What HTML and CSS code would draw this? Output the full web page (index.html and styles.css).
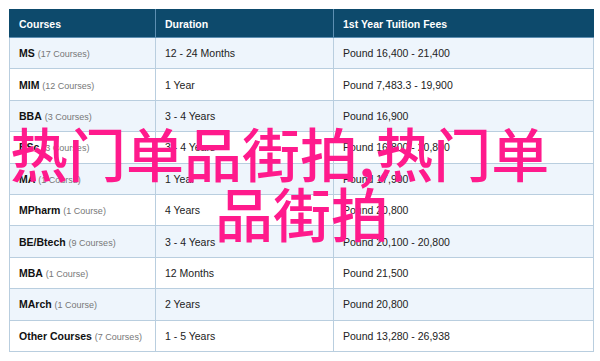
FILE: index.html
```html
<!DOCTYPE html>
<html lang="zh">
<head>
<meta charset="utf-8">
<title>Courses</title>
<link rel="stylesheet" href="styles.css">
</head>
<body>
<div class="page">
  <table class="courses">
    <colgroup>
      <col class="c1"><col class="c2"><col class="c3">
    </colgroup>
    <thead>
      <tr><th>Courses</th><th>Duration</th><th>1st Year Tuition Fees</th></tr>
    </thead>
    <tbody>
      <tr><td><b>MS</b> <span class="n">(17 Courses)</span></td><td>12 - 24 Months</td><td class="fee">Pound 16,400 - 21,400</td></tr>
      <tr><td><b>MIM</b> <span class="n">(12 Courses)</span></td><td>1 Year</td><td class="fee">Pound 7,483.3 - 19,900</td></tr>
      <tr><td><b>BBA</b> <span class="n">(3 Courses)</span></td><td>3 - 4 Years</td><td class="fee">Pound 16,900</td></tr>
      <tr><td><b>BSc</b> <span class="n">(3 Courses)</span></td><td>3 - 4 Years</td><td class="fee">Pound 16,800 - 20,800</td></tr>
      <tr><td><b>MA</b> <span class="n">(1 Course)</span></td><td>1 Year</td><td class="fee">Pound 17,900</td></tr>
      <tr><td><b>MPharm</b> <span class="n">(1 Course)</span></td><td>4 Years</td><td class="fee">Pound 20,800</td></tr>
      <tr><td><b>BE/Btech</b> <span class="n">(9 Courses)</span></td><td>3 - 4 Years</td><td class="fee">Pound 20,100 - 20,800</td></tr>
      <tr><td><b>MBA</b> <span class="n">(1 Course)</span></td><td>12 Months</td><td class="fee">Pound 21,500</td></tr>
      <tr><td><b>MArch</b> <span class="n">(1 Course)</span></td><td>2 Years</td><td class="fee">Pound 20,800</td></tr>
      <tr><td><b>Other Courses</b> <span class="n">(7 Courses)</span></td><td>1 - 5 Years</td><td class="fee">Pound 13,280 - 26,938</td></tr>
    </tbody>
  </table>
  <div class="overlay">
    <div class="line1">热门单品街拍,热门单</div>
    <div class="line2">品街拍</div>
  </div>
</div>
</body>
</html>
```

FILE: styles.css
```css
html, body {
  margin: 0;
  padding: 0;
  background: #ffffff;
}
.page {
  position: relative;
  width: 600px;
  height: 361px;
  padding: 9px 0 0 9px;
  box-sizing: border-box;
  font-family: "Liberation Sans", Arial, sans-serif;
}
.courses {
  border-collapse: collapse;
  table-layout: fixed;
  width: 584px;
  font-size: 10.5px;
  color: #222222;
}
.c1 { width: 146px; }
.c2 { width: 178px; }
.c3 { width: 260px; }
.courses th {
  background: #0d4a6c;
  color: #ffffff;
  font-weight: bold;
  text-align: left;
  height: 28px;
  padding: 0 0 0 9px;
  border: 1px solid #5d8fb2;
  border-top-color: #0d4a6c;
  box-sizing: border-box;
}
.courses th:first-child { border-left-color: #0d4a6c; }
.courses th:last-child { border-right-color: #0d4a6c; }
.courses td {
  height: 31.4px;
  padding: 0 0 0 9px;
  border: 1px solid #b9cedf;
  box-sizing: border-box;
  white-space: nowrap;
}
.courses td b { color: #111111; }
.courses tbody tr:nth-child(odd) td { background: #eef5fc; }
.courses .n {
  font-size: 9px;
  color: #777777;
}
.overlay {
  position: absolute;
  left: 0;
  top: 122px;
  width: 600px;
  font-family: "Noto Sans CJK SC", sans-serif;
  font-size: 58px;
  font-weight: 500;
  line-height: 60px;
  color: #ff1a8c;
}
.line1 { padding-left: 10px; white-space: nowrap; }
.line2 { text-align: center; padding-left: 4px; }
```
